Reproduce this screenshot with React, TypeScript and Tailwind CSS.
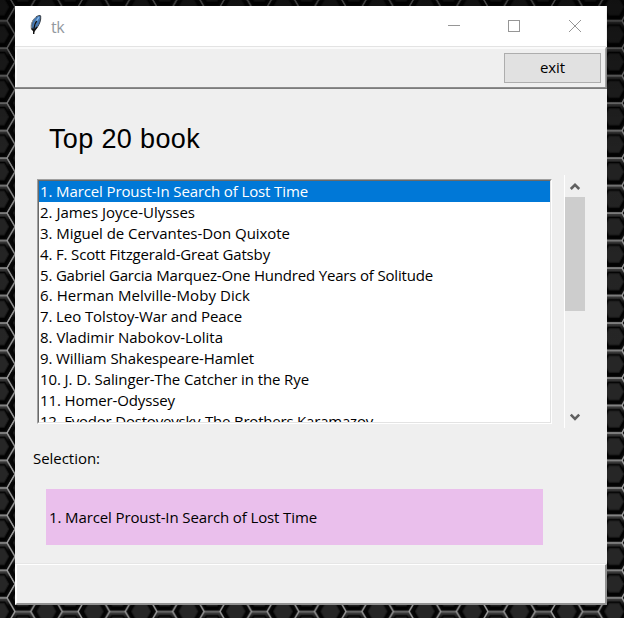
import React from "react";

const UI = "font-['Open_Sans','Noto_Sans',sans-serif]";

const books: { title: string; width: number }[] = [
  { title: "1. Marcel Proust-In Search of Lost Time", width: 268 },
  { title: "2. James Joyce-Ulysses", width: 155 },
  { title: "3. Miguel de Cervantes-Don Quixote", width: 250 },
  { title: "4. F. Scott Fitzgerald-Great Gatsby", width: 230 },
  { title: "5. Gabriel Garcia Marquez-One Hundred Years of Solitude", width: 393 },
  { title: "6. Herman Melville-Moby Dick", width: 210 },
  { title: "7. Leo Tolstoy-War and Peace", width: 202 },
  { title: "8. Vladimir Nabokov-Lolita", width: 183 },
  { title: "9. William Shakespeare-Hamlet", width: 214 },
  { title: "10. J. D. Salinger-The Catcher in the Rye", width: 269 },
  { title: "11. Homer-Odyssey", width: 135 },
  { title: "12. Fyodor Dostoyevsky-The Brothers Karamazov", width: 333 },
];

// Keeps a line of text at a fixed advance width by adjusting its letter spacing.
function FitText({ text, width }: { text: string; width: number }) {
  const ref = React.useRef<HTMLSpanElement>(null);
  const [spacing, setSpacing] = React.useState(0);
  React.useLayoutEffect(() => {
    if (ref.current) {
      setSpacing((width - ref.current.getBoundingClientRect().width) / text.length);
    }
  }, [text, width]);
  return (
    <span ref={ref} className="inline-block whitespace-pre" style={{ letterSpacing: spacing }}>
      {text}
    </span>
  );
}

const cells = [
  [0, 0],
  [47.3, 0],
  [0, 27.48],
  [47.3, 27.48],
  [23.65, 13.74],
];

function Backdrop() {
  return (
    <svg className="absolute inset-0" width="624" height="618">
      <defs>
        <linearGradient id="rim" x1="0" y1="0" x2="0" y2="1">
          <stop offset="0" stopColor="#484848" />
          <stop offset="0.3" stopColor="#050505" />
          <stop offset="1" stopColor="#0b0b0b" />
        </linearGradient>
        <linearGradient id="shade" x1="0" y1="0" x2="0" y2="1">
          <stop offset="0" stopColor="#000" stopOpacity="0.55" />
          <stop offset="0.25" stopColor="#000" stopOpacity="0.12" />
          <stop offset="0.6" stopColor="#000" stopOpacity="0" />
        </linearGradient>
        <pattern id="hex" x="-0.8" y="34.4" width="47.3" height="27.48" patternUnits="userSpaceOnUse">
          {cells.map(([x, y]) => (
            <g key={`${x}-${y}`} transform={`translate(${x} ${y})`}>
              <path d="M-15.8 0L-7.9-13.74H7.9L15.8 0L7.9 13.74H-7.9Z" fill="url(#rim)" />
              <path d="M-12 1L-6-10H6L12 1L6 12H-6Z" fill="#020202" />
              <path d="M-9.5 0L-5-8H5L9.5 0L5 8H-5Z" fill="#262626" stroke="#1a1a1a" />
            </g>
          ))}
          {cells.map(([x, y]) => (
            <path
              key={`${x}-${y}`}
              transform={`translate(${x} ${y})`}
              d="M-15.8 0L-7.9-13.74H7.9L15.8 0L7.9 13.74H-7.9Z"
              fill="none"
              stroke="#9c9c9c"
              strokeWidth="1.2"
            />
          ))}
        </pattern>
      </defs>
      <rect width="624" height="618" fill="url(#hex)" />
      <rect width="624" height="618" fill="url(#shade)" />
    </svg>
  );
}

function Feather() {
  return (
    <svg width="14" height="22" viewBox="0 0 14 22">
      <path d="M3.5 15.5C1.5 12 3 6 7 3C9 1.5 11.5 1 11.7 2C12.2 6 10.5 10 8.5 13C7 15 5.5 16 3.5 15.5Z" fill="#4378b4" stroke="#3a3f45" strokeWidth="1" />
      <path d="M2.5 15C1.2 11 3.5 6 7 3" fill="none" stroke="#8b949b" strokeWidth="1" />
      <path d="M10 3Q6 8 5 13" fill="none" stroke="#86b8e8" strokeWidth="1.3" />
      <path d="M7.7 7Q4.6 11 4.7 20" fill="none" stroke="#111" strokeWidth="1.4" />
      <path d="M2.5 14.5L5 17L8 13" fill="none" stroke="#151515" strokeWidth="1.5" />
    </svg>
  );
}

function TitleBar() {
  return (
    <header className="flex h-10 items-center bg-white text-[#93999f]">
      <div className="ml-3.5 mt-[-2px] h-[22px] w-[14px]"><Feather /></div>
      <span className={`${UI} ml-2 mt-px text-base leading-5`}><FitText text="tk" width={13} /></span>
      <svg className="ml-auto mr-[23px]" width="136" height="14" fill="none" stroke="#969696" shapeRendering="crispEdges">
        <path d="M1 6.5H13" />
        <path d="M61.5 1.5H72.5V12.5H61.5Z" />
        <path d="M122 1L134 13M134 1L122 13" shapeRendering="auto" />
      </svg>
    </header>
  );
}

function ScrollBar() {
  return (
    <div className="ml-[11px] flex h-[253px] w-[21px] flex-col items-center border-l border-white">
      <svg width="20" height="22" fill="none" stroke="#606060" strokeWidth="2.6">
        <path d="M5.8 14L10 9.8L14.2 14" />
      </svg>
      <div className="h-[114px] w-full bg-[#cdcdcd]" />
      <svg className="mt-auto" width="20" height="22" fill="none" stroke="#606060" strokeWidth="2.6">
        <path d="M5.8 8.7L10 12.9L14.2 8.7" />
      </svg>
    </div>
  );
}

export default function App() {
  return (
    <div className={`${UI} relative h-[618px] w-[624px] overflow-hidden bg-black pl-[15px] pt-1.5 text-black`}>
      <Backdrop />
      <main className="relative flex h-[599px] w-[592px] flex-col bg-[#efefef]">
        <div className="w-[591px] border-b border-b-[#e3e3e3] bg-white">
          <TitleBar />
        </div>
        <div className="h-[42px] border-b border-[#7c7c7c] bg-[#8c8c8c] pb-px pr-px">
          <div className="flex h-full items-center justify-end border-l-2 border-r border-t-2 border-l-[#fafafa] border-r-[#a6a6a6] border-t-[#fafafa] bg-[#efefef] pr-1">
            <button className="mb-px flex h-[30px] w-[97px] items-center justify-center border border-[#adadad] bg-[#e1e1e1] text-[15px]">
              <FitText text="exit" width={25} />
            </button>
          </div>
        </div>
        <h1 className="ml-[34px] mt-[34px] h-8 font-['Liberation_Sans',Arial,sans-serif] text-[27px] leading-8">
          <FitText text="Top 20 book" width={151} />
        </h1>
        <section className="ml-[22px] mt-5 flex items-start">
          <div className="mr-px mt-1 h-[245px] w-[515px] border border-b-white border-l-[#a0a0a0] border-r-white border-t-[#a0a0a0]">
            <ul className="h-full overflow-hidden border border-b-[#e3e3e3] border-l-[#696969] border-r-[#e3e3e3] border-t-[#696969] bg-white text-[15px]">
              {books.map((book, i) => (
                <li
                  key={book.title}
                  className={i === 0 ? "h-[20.9px] bg-[#0078d7] pl-px leading-[21px] text-white" : "h-[20.9px] pl-px leading-[21px]"}
                >
                  <FitText text={book.title} width={book.width} />
                </li>
              ))}
            </ul>
          </div>
          <ScrollBar />
        </section>
        <div className="ml-[18px] mt-[19px] h-[22px] text-[15px] leading-[22px]">
          <FitText text="Selection:" width={67} />
        </div>
        <div className="ml-[31px] mt-5 flex h-14 w-[497px] items-center bg-[#eabfec] pl-[3px] text-[15px]">
          <FitText text="1. Marcel Proust-In Search of Lost Time" width={268} />
        </div>
        <div className="mt-auto border-t border-[#e6e6e6]">
          <footer className="h-[41px] border-b-2 border-l-2 border-r-2 border-t border-b-[#929292] border-l-white border-r-[#929292] border-t-white" />
        </div>
      </main>
    </div>
  );
}
